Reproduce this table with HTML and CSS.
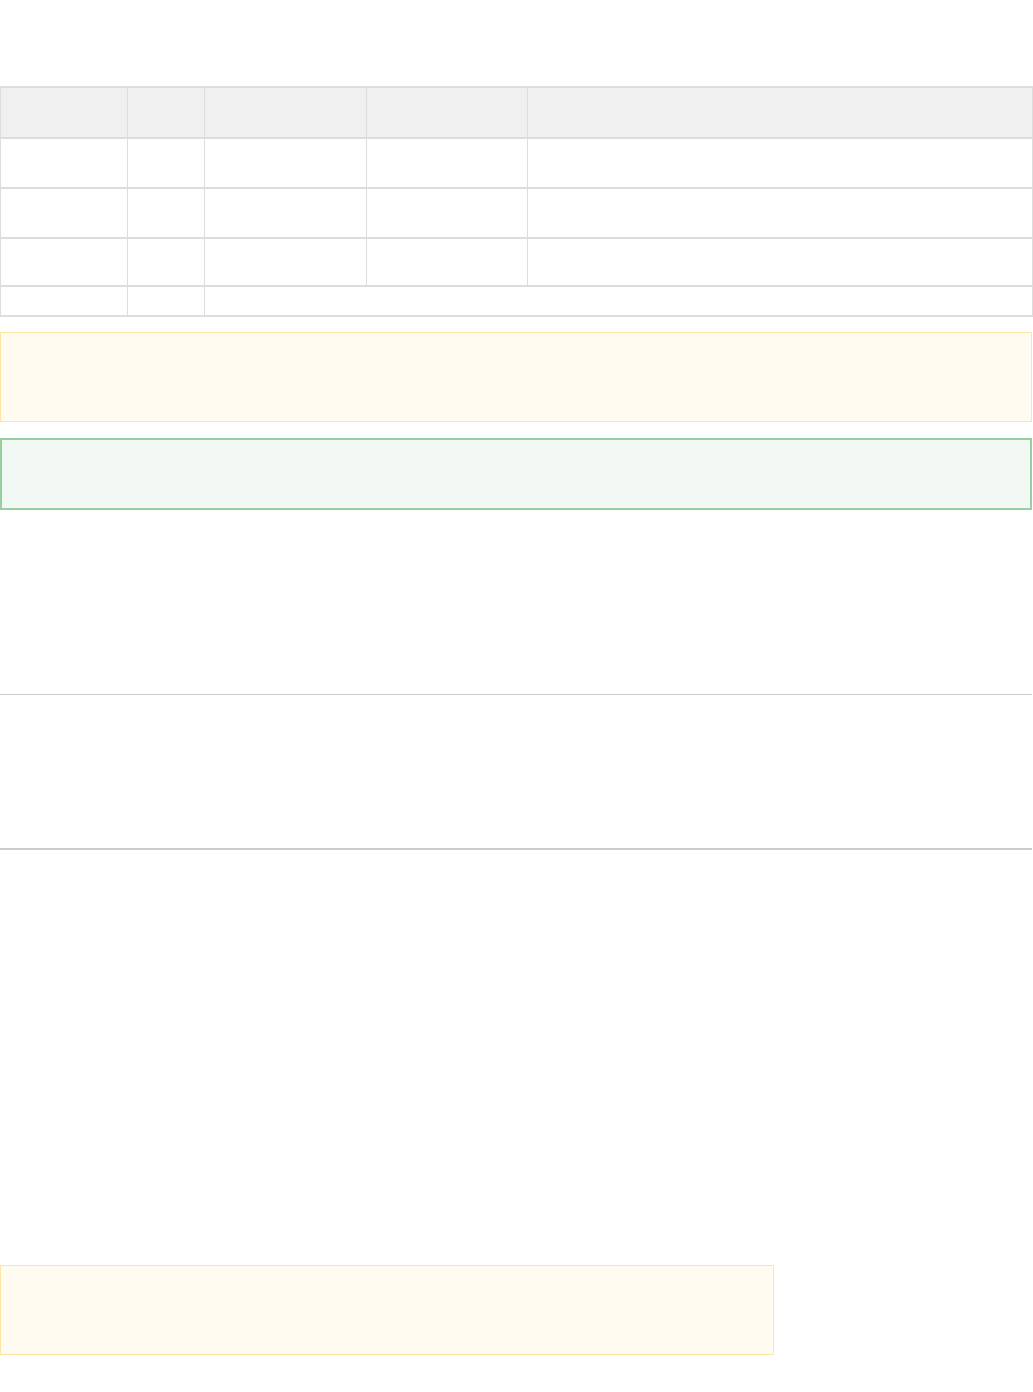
FILE: index.html
```html
<!DOCTYPE html>
<html lang="en">
<head>
<meta charset="utf-8">
<title>Page</title>
<link rel="stylesheet" href="styles.css">
</head>
<body>
<main class="page">
  <table class="grid">
    <colgroup>
      <col class="c1"><col class="c2"><col class="c3"><col class="c4"><col class="c5">
    </colgroup>
    <thead>
      <tr class="head"><th></th><th></th><th></th><th></th><th></th></tr>
    </thead>
    <tbody>
      <tr class="row"><td></td><td></td><td></td><td></td><td></td></tr>
      <tr class="row"><td></td><td></td><td></td><td></td><td></td></tr>
      <tr class="row row-short"><td></td><td></td><td></td><td></td><td></td></tr>
      <tr class="row row-foot"><td></td><td></td><td colspan="3"></td></tr>
    </tbody>
  </table>

  <div class="note note-warn"></div>
  <div class="note note-ok"></div>

  <hr class="rule rule-thin">
  <hr class="rule rule-thick">

  <div class="note note-warn note-narrow"></div>
</main>
</body>
</html>
```

FILE: styles.css
```css
html, body {
  margin: 0;
  padding: 0;
  background: #ffffff;
  font-family: "Liberation Sans", Arial, sans-serif;
}

.page {
  width: 1032px;
  padding-top: 86px;
  display: flex;
  flex-direction: column;
}

.grid {
  width: 1032px;
  border-collapse: collapse;
  table-layout: fixed;
}

.c1 { width: 127px; }
.c2 { width: 77px; }
.c3 { width: 162px; }
.c4 { width: 161px; }
.c5 { width: 505px; }

.grid th,
.grid td {
  padding: 0;
  border-left: 1px solid #dddddd;
  border-right: 1px solid #dddddd;
  border-top: 2px solid #dddddd;
  border-bottom: 2px solid #dddddd;
}

.head th {
  background: #f0f0f0;
  height: 49px;
}

.row td {
  height: 48px;
  background: #ffffff;
}

.row-short td {
  height: 46px;
}

.row-foot td {
  height: 28px;
}

.note {
  box-sizing: border-box;
}

.note-warn {
  margin-top: 15px;
  height: 90px;
  border: 1px solid #ffe6a6;
  background: #fffbf1;
}

.note-ok {
  margin-top: 16px;
  height: 72px;
  border: 2px solid #98cf9f;
  background: #f2f8f3;
}

.rule {
  margin: 0;
  border: 0;
}

.rule-thin {
  margin-top: 184px;
  height: 1px;
  background: #cccccc;
}

.rule-thick {
  margin-top: 153px;
  height: 2px;
  background: #cccccc;
}

.note-narrow {
  margin-top: 415px;
  width: 774px;
}
```
